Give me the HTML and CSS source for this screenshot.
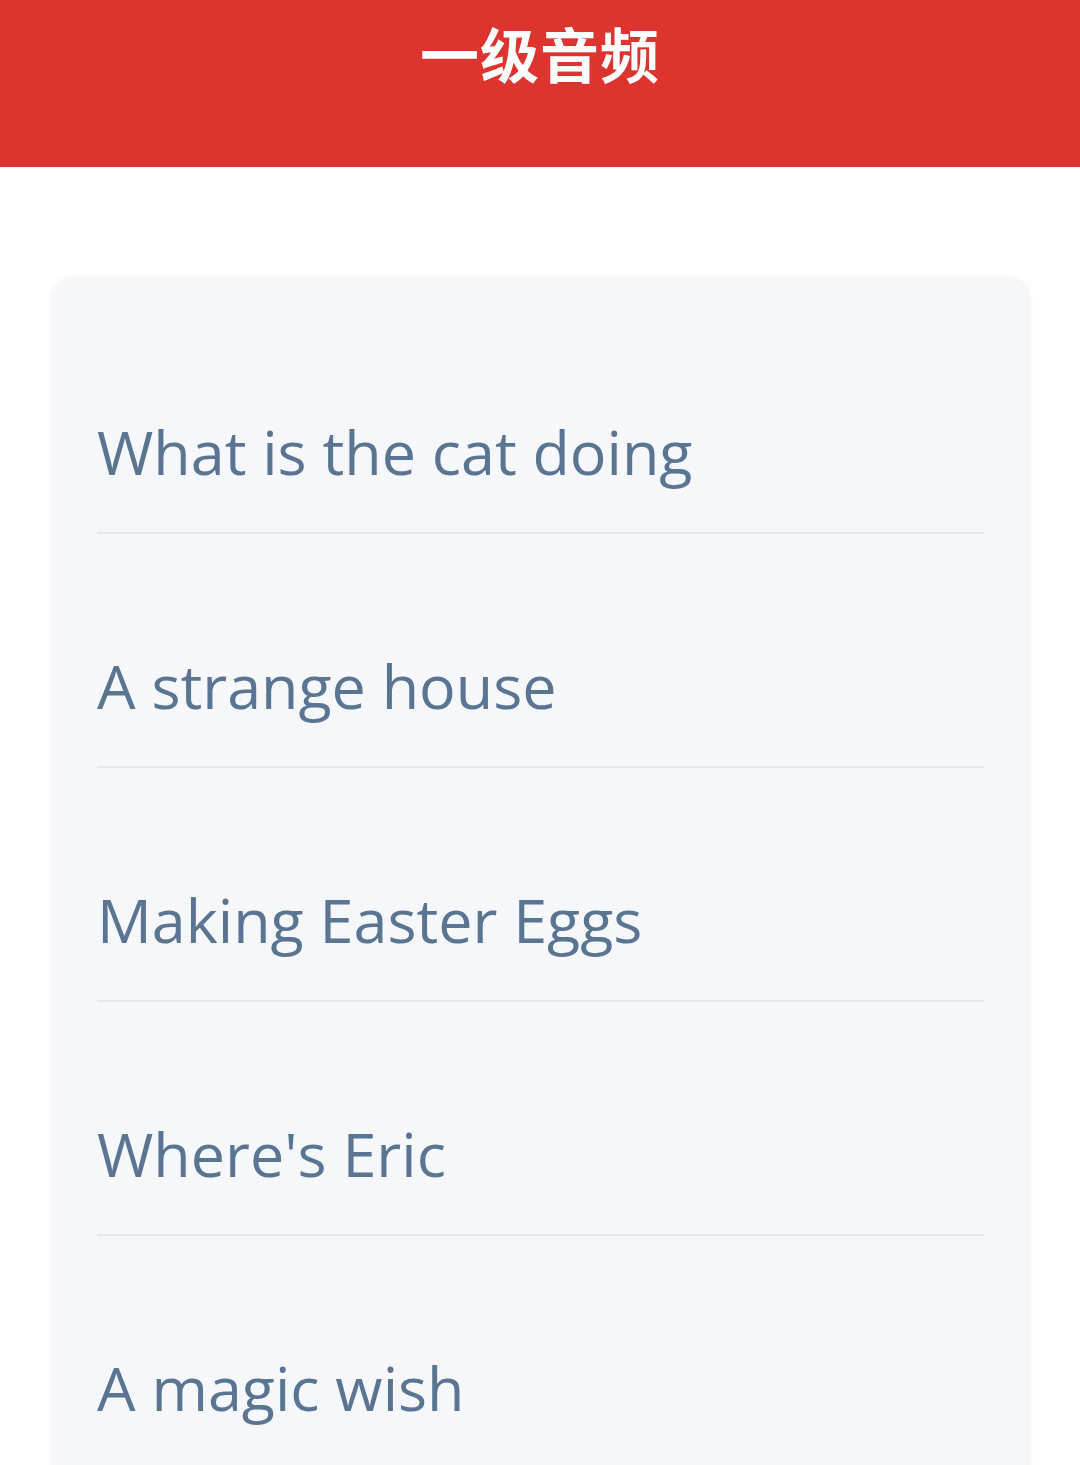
FILE: index.html
```html
<!DOCTYPE html>
<html lang="zh">
<head>
<meta charset="utf-8">
<link rel="stylesheet" href="styles.css">
</head>
<body>
<header class="topbar"><h1 class="title">一级音频</h1></header>
<main class="content">
  <ul class="list">
    <li class="item">What is the cat doing</li>
    <li class="item">A strange house</li>
    <li class="item">Making Easter Eggs</li>
    <li class="item">Where's Eric</li>
    <li class="item">A magic wish</li>
  </ul>
</main>
</body>
</html>
```
FILE: styles.css
```css
html, body { margin: 0; padding: 0; background: #ffffff; }
body { width: 1080px; height: 1465px; overflow: hidden; font-family: "Open Sans", "Noto Sans", sans-serif; }
.topbar {
  height: 167px;
  background: #dd3430;
  display: flex;
  justify-content: center;
  align-items: flex-start;
}
.title {
  margin: 0;
  padding-top: 15px;
  color: #ffffff;
  font-family: "Noto Sans CJK SC", sans-serif;
  font-weight: 700;
  font-size: 59px;
  line-height: 76px;
  letter-spacing: 1px;
}
.content { padding: 110px 49px 0 50px; }
.list {
  list-style: none;
  margin: 0;
  padding: 23px 47px 60px 47px;
  background: #f5f7fa;
  border-radius: 22px;
  box-shadow: 0 0 6px rgba(0,0,0,0.03);
}
.item {
  box-sizing: border-box;
  height: 234px;
  padding-top: 104px;
  font-size: 61px;
  line-height: 96px;
  color: #5a7591;
  border-bottom: 2px solid #e5e8ed;
  white-space: nowrap;
}
```
